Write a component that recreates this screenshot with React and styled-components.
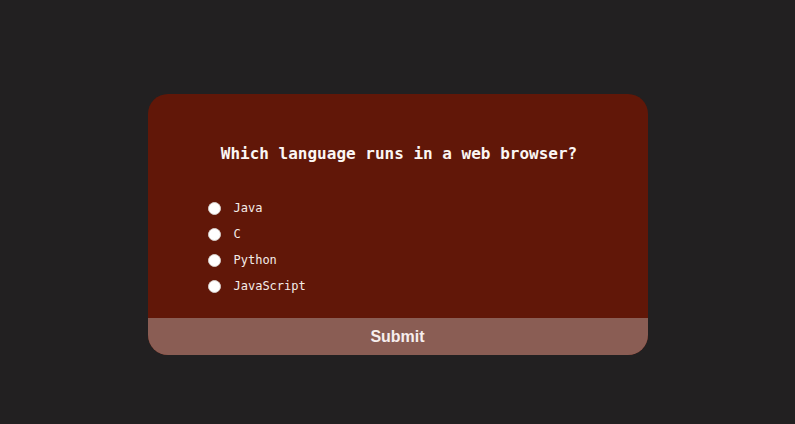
import React, { useState } from "react";
import styled, { createGlobalStyle } from "styled-components";

const GlobalStyle = createGlobalStyle`
  html, body {
    margin: 0;
    padding: 0;
    background-color: #222021;
  }
`;

const Page = styled.div`
  min-height: 100vh;
  padding-top: 94px;
  box-sizing: border-box;
  display: flex;
  justify-content: center;
  align-items: flex-start;
`;

const QuizCard = styled.form`
  width: 500px;
  background-color: #611708;
  border-radius: 20px;
  overflow: hidden;
  display: flex;
  flex-direction: column;
  font-family: "DejaVu Sans Mono", "Liberation Mono", monospace;
  color: #f4ece8;
`;

const Question = styled.h2`
  margin: 0;
  padding: 50px 0 0 3px;
  font-size: 16px;
  line-height: 20px;
  font-weight: bold;
  text-align: center;
  color: #fbf6f4;
`;

const OptionList = styled.ul`
  list-style: none;
  margin: 0;
  padding: 35px 0 23px 60px;
  display: flex;
  flex-direction: column;
  gap: 8px;
`;

const OptionRow = styled.li`
  display: flex;
  align-items: center;
  gap: 13px;
  height: 18px;
  font-size: 12px;
`;

const Radio = styled.input`
  appearance: none;
  margin: 0;
  width: 13px;
  height: 13px;
  border-radius: 50%;
  background-color: #ffffff;
  border: 1px solid #d8d0cc;
  box-sizing: border-box;
  cursor: pointer;

  &:checked {
    border: 4px solid #ffffff;
    background-color: #611708;
  }
`;

const OptionLabel = styled.label`
  cursor: pointer;
`;

const SubmitButton = styled.button`
  height: 37px;
  border: none;
  background-color: #8a5d54;
  color: #f7eeee;
  font-family: "Liberation Sans", Arial, sans-serif;
  font-size: 16px;
  font-weight: bold;
  cursor: pointer;
`;

const options = ["Java", "C", "Python", "JavaScript"];

export default function App() {
  const [answer, setAnswer] = useState("");

  return (
    <>
      <GlobalStyle />
      <Page>
        <QuizCard onSubmit={(e) => e.preventDefault()}>
          <Question>Which language runs in a web browser?</Question>
          <OptionList>
            {options.map((opt) => (
              <OptionRow key={opt}>
                <Radio
                  type="radio"
                  name="answer"
                  id={opt}
                  checked={answer === opt}
                  onChange={() => setAnswer(opt)}
                />
                <OptionLabel htmlFor={opt}>{opt}</OptionLabel>
              </OptionRow>
            ))}
          </OptionList>
          <SubmitButton type="submit">Submit</SubmitButton>
        </QuizCard>
      </Page>
    </>
  );
}
